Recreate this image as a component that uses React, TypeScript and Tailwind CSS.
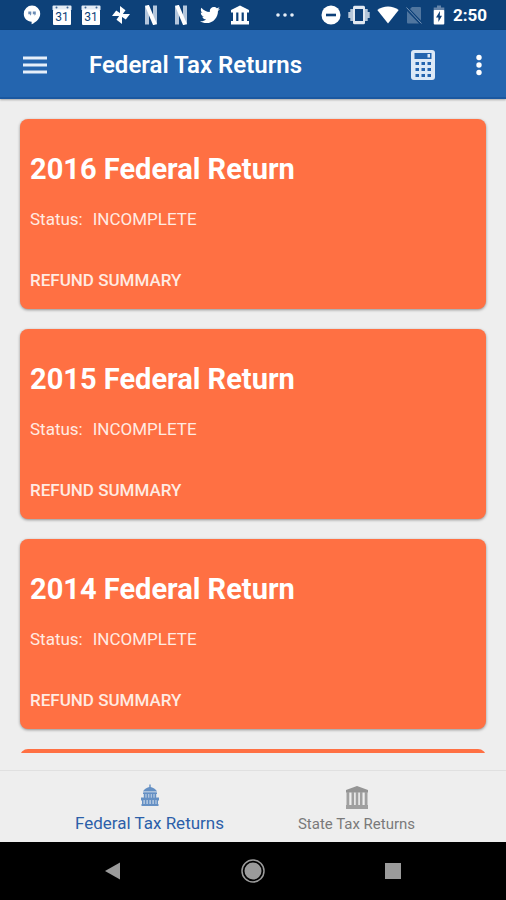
import { FaTwitter } from "react-icons/fa";

const returns = [
  { year: 2016, status: "INCOMPLETE" },
  { year: 2015, status: "INCOMPLETE" },
  { year: 2014, status: "INCOMPLETE" },
];

const HangoutsIcon = () => (
  <svg width="20" height="20" viewBox="0 0 20 20" fill="#fff">
    <path d="M10 0.500a8.200 8.200 0 0 0-8.200 8.200c0 4.500 3.400 7.900 7.800 8v2.600c4.800-2.300 8.600-6 8.600-10.600A8.200 8.200 0 0 0 10 0.500z" />
    <path d="M6.300 6.500h3v2.800L8 10.800V9.300H6.300zM10.800 6.500h3v2.800l-1.300 1.500V9.300h-1.700z" fill="#6c8db5" />
  </svg>
);

const CalendarIcon = () => (
  <svg width="20" height="20" viewBox="0 0 20 20">
    <path d="M1.500 0.500h17a1 1 0 0 1 1 1V5h-19V1.500a1 1 0 0 1 1-1z" fill="#e4ecf5" />
    <rect x="1" y="4.500" width="18" height="15.500" rx="1" fill="#fff" />
    <circle cx="4.500" cy="2.500" r="1" fill="#3e6796" />
    <circle cx="15.500" cy="2.500" r="1" fill="#3e6796" />
    <text x="10" y="16" textAnchor="middle" fontSize="12" fontFamily="Roboto, sans-serif" fill="#0d3f78">31</text>
  </svg>
);

const PinwheelIcon = () => (
  <svg width="20" height="20" viewBox="0 0 20 20" fill="#fff">
    {[0, 90, 180, 270].map((a) => (
      <path key={a} d="M9 10V1l5.500 4.200L11.200 10z" transform={`rotate(${a} 10 10)`} />
    ))}
  </svg>
);

const NetflixIcon = () => (
  <svg width="20" height="20" viewBox="0 0 20 20">
    <rect x="4" y="0.500" width="4" height="19" fill="#b4c7dd" />
    <rect x="12" y="0.500" width="4" height="19" fill="#b4c7dd" />
    <path d="M6 0.500l8 19" stroke="#fff" strokeWidth="4" />
  </svg>
);

const BankIcon = () => (
  <svg width="20" height="20" viewBox="0 0 20 20" fill="#fff">
    <path d="M10 0.500L19 5v2.500H1V5zM3 7.500h3.200V16H3zM8.400 7.500h3.200V16H8.400zM13.800 7.500H17V16h-3.200zM1 16h18v3.500H1z" />
  </svg>
);

const DotsIcon = () => (
  <svg width="20" height="20" viewBox="0 0 20 20" fill="#e6eef7">
    <circle cx="3" cy="10" r="1.800" />
    <circle cx="10" cy="10" r="1.800" />
    <circle cx="17" cy="10" r="1.800" />
  </svg>
);

const DndIcon = () => (
  <svg width="20" height="20" viewBox="0 0 20 20">
    <circle cx="10" cy="10" r="9.500" fill="#fff" />
    <rect x="5" y="8.700" width="10" height="2.600" fill="#0d3f78" />
  </svg>
);

const VibrateIcon = () => (
  <svg width="22" height="20" viewBox="0 0 22 20">
    <path d="M0.300 7h2V4h17.400v3h2v6h-2v3H2.300v-3h-2z" fill="#b4c5d9" />
    <rect x="5" y="0.800" width="12" height="18.400" rx="1.500" fill="#e1e8f1" />
    <rect x="7" y="4" width="8" height="12" fill="#0d3f78" />
  </svg>
);

const WifiIcon = () => (
  <svg width="22" height="20" viewBox="0 0 22 20" fill="#fff">
    <path d="M11 18.500L0.300 5C3.200 2.800 7 1.600 11 1.600s7.800 1.200 10.700 3.400z" />
  </svg>
);

const NoSimIcon = () => (
  <svg width="16" height="20" viewBox="0 0 16 20">
    <path d="M6 2h8a1 1 0 0 1 1 1v12.500L4 4zM1 6L13 18.500H2a1 1 0 0 1-1-1z" fill="#50769f" />
    <path d="M0.500 2.500l15 16" stroke="#7895b7" strokeWidth="1" />
  </svg>
);

const BatteryIcon = () => (
  <svg width="12" height="20" viewBox="0 0 12 20">
    <path d="M4 0.500h4v2h3.300V6H0.700V2.500H4z" fill="#6685aa" />
    <rect x="0.700" y="5" width="10.600" height="14.500" rx="1" fill="#fff" />
    <path d="M7 6L3 12.500h2.400V17L9 10.800H6.800z" fill="#0d3f78" />
  </svg>
);

const CalculatorIcon = () => (
  <svg width="26" height="32" viewBox="0 0 26 32">
    <rect x="1" y="1" width="24" height="30" rx="3" fill="#dce9f7" />
    <rect x="4.500" y="4" width="17" height="6" fill="#2465af" />
    <rect x="17.500" y="5" width="2.500" height="3.500" fill="#dce9f7" />
    {[13, 19, 25].map((y) =>
      [5.500, 11.500, 17.500].map((x) => (
        <rect key={`${x}-${y}`} x={x} y={y} width="3.500" height="3" fill="#2465af" />
      ))
    )}
  </svg>
);

const CapitolIcon = () => (
  <svg width="20" height="24" viewBox="0 0 20 24" fill="#6590c4">
    <path d="M9.300 1.500h1.400V4c3 0.800 5.300 2.200 6.300 4.500H3C4 6.200 6.300 4.800 9.300 4z" />
    <rect x="3.500" y="8.500" width="13" height="6" fill="#adc3de" />
    <path d="M3 9.500h14V11H3zM4 11h1.300v4H4zM6.700 11H8v4H6.700zM9.400 11h1.300v4H9.400zM12 11h1.300v4H12zM14.700 11H16v4h-1.300z" />
    <path d="M1 14.500h18v3H1zM1.500 21h17v2h-17z" />
    <rect x="2" y="17.500" width="16" height="3.500" fill="#adc3de" />
    <path d="M2 17h1.300v4H2zM5 17h1.300v4H5zM8 17h1.300v4H8zM11 17h1.300v4H11zM14 17h1.300v4H14zM16.700 17H18v4h-1.300z" />
  </svg>
);

const StatehouseIcon = () => (
  <svg width="24" height="24" viewBox="0 0 24 24" fill="#a0a0a0">
    <path d="M12 1L23 5v2.500H1V5z" fill="#949494" />
    <path d="M1.500 7h2.800v13H1.500zM6.500 7h2.600v13H6.500zM10.700 7h2.600v13h-2.600zM14.900 7h2.600v13h-2.600zM19.700 7h2.800v13h-2.800z" />
    <rect x="1" y="20" width="22" height="4" />
  </svg>
);

const StatusBar = () => (
  <div className="flex h-[30px] shrink-0 items-center bg-[#0d4179] pl-[22px] pr-[19px] text-white">
    <div className="flex w-[228px] items-center justify-between">
      <HangoutsIcon />
      <CalendarIcon />
      <CalendarIcon />
      <PinwheelIcon />
      <NetflixIcon />
      <NetflixIcon />
      <FaTwitter size={20} />
      <BankIcon />
    </div>
    <div className="ml-[25px]">
      <DotsIcon />
    </div>
    <div className="ml-auto flex items-center gap-[7px]">
      <DndIcon />
      <VibrateIcon />
      <WifiIcon />
      <NoSimIcon />
      <div className="flex items-center gap-2 pl-1">
        <BatteryIcon />
        <span className="text-[17px] font-bold leading-5">2:50</span>
      </div>
    </div>
  </div>
);

const ReturnCard = ({ year, status }: { year: number; status: string }) => (
  <article className="h-[190px] shrink-0 rounded-lg bg-[#ff7043] px-[10px] pt-8 text-white shadow-[0_1px_3px_rgba(0,0,0,0.4)]">
    <h2 className="text-[29px] font-bold leading-9">{year} Federal Return</h2>
    <p className="mt-[22px] flex gap-[10px] text-[17px] leading-5 text-[#ffebe2]">
      <span>Status:</span>
      <span>{status}</span>
    </p>
    <button type="button" className="mt-[41px] block text-[17px] font-medium leading-5 text-[#ffebe2]">
      REFUND SUMMARY
    </button>
  </article>
);

export default function App() {
  return (
    <div className="flex h-screen flex-col bg-[#eeeeee] font-[Roboto,sans-serif]">
      <StatusBar />

      <header className="z-10 flex h-[69px] shrink-0 items-center border-b-2 border-[#1b58a0] bg-[#2465af] pl-[23px] pr-[17px] pt-[2px] text-white shadow-[0_1px_2px_rgba(0,0,0,0.3)]">
        <button type="button" aria-label="Menu">
          <svg width="24" height="20" viewBox="0 0 24 20" fill="#e6effa">
            <path d="M0 1.500h24v3H0zM0 8.500h24v3H0zM0 15.500h24v3H0z" />
          </svg>
        </button>
        <h1 className="ml-[42px] text-[24px] font-semibold leading-8">Federal Tax Returns</h1>
        <button type="button" aria-label="Calculator" className="ml-auto">
          <CalculatorIcon />
        </button>
        <button type="button" aria-label="More options" className="ml-[33px]">
          <svg width="20" height="24" viewBox="0 0 20 24" fill="#fff">
            <circle cx="10" cy="4.500" r="2.700" />
            <circle cx="10" cy="12" r="2.700" />
            <circle cx="10" cy="19.500" r="2.700" />
          </svg>
        </button>
      </header>

      <main className="mb-[17px] flex min-h-0 flex-1 flex-col gap-5 overflow-hidden px-5 pt-5">
        {returns.map((r) => (
          <ReturnCard key={r.year} year={r.year} status={r.status} />
        ))}
        {/* top edge of the next card */}
        <div className="h-8 shrink-0 rounded-t-lg bg-[#ff7043]" />
      </main>

      <nav className="flex h-[72px] shrink-0 justify-center border-t border-[#e0e0e0]">
        <a href="#federal" className="flex w-[207px] flex-col items-center pt-3 text-[17px] leading-6 text-[#2c5fa9]">
          <CapitolIcon />
          <span className="mt-1">Federal Tax Returns</span>
        </a>
        <a href="#state" className="flex w-[207px] flex-col items-center pt-[14px] text-[15px] leading-6 text-[#7a7a7a]">
          <StatehouseIcon />
          <span className="mt-[3px]">State Tax Returns</span>
        </a>
      </nav>

      <div className="flex h-[58px] shrink-0 items-center justify-center gap-[116px] bg-black">
        <button type="button" aria-label="Back">
          <svg width="24" height="24" viewBox="0 0 24 24" fill="#9b9b9b">
            <path d="M4 12L19 3.500v17z" />
          </svg>
        </button>
        <button type="button" aria-label="Home">
          <svg width="24" height="24" viewBox="0 0 24 24">
            <circle cx="12" cy="12" r="11" fill="none" stroke="#9b9b9b" strokeWidth="1.500" />
            <circle cx="12" cy="12" r="8.500" fill="#9b9b9b" />
          </svg>
        </button>
        <button type="button" aria-label="Recent apps">
          <svg width="24" height="24" viewBox="0 0 24 24" fill="#9b9b9b">
            <rect x="4" y="4" width="16" height="16" />
          </svg>
        </button>
      </div>
    </div>
  );
}
